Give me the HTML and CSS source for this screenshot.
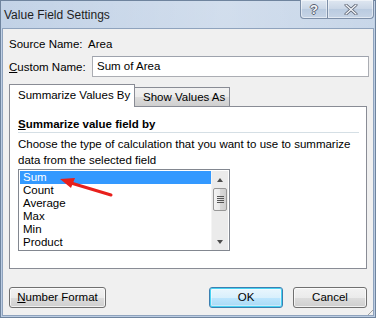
FILE: index.html
```html
<!DOCTYPE html>
<html lang="en">
<head>
    <meta charset="UTF-8">
    <title>Value Field Settings</title>
    <link rel="stylesheet" href="styles.css">
</head>
<body>
    <div class="window">
        <div class="titlebar">
            <span class="title">Value Field Settings</span>
            <div class="caption-btns">
                <div class="cap-btn help">?</div>
                <div class="cap-btn close">
                    <svg width="14" height="11" viewBox="0 0 14 11">
                        <path d="M2 1 L12 10 M12 1 L2 10" stroke="#5a6170" stroke-width="3" stroke-linecap="round"/>
                        <path d="M2 1 L12 10 M12 1 L2 10" stroke="#f4f6f9" stroke-width="1.4" stroke-linecap="round"/>
                    </svg>
                </div>
            </div>
        </div>

        <div class="content">
            <div class="row source-row">
                <span class="label">Source Name:</span>
                <span class="value">Area</span>
            </div>
            <div class="row custom-row">
                <span class="label"><u>C</u>ustom Name:</span>
                <div class="textbox">Sum of Area</div>
            </div>

            <div class="tabs">
                <div class="tab active">Summarize Values By</div>
                <div class="tab">Show Values As</div>
            </div>

            <div class="panel">
                <div class="heading"><u>S</u>ummarize value field by</div>
                <p class="desc">Choose the type of calculation that you want to use to summarize<br>data from the selected field</p>

                <div class="listbox">
                    <ul class="items">
                        <li class="selected">Sum</li>
                        <li>Count</li>
                        <li>Average</li>
                        <li>Max</li>
                        <li>Min</li>
                        <li>Product</li>
                    </ul>
                    <div class="scrollbar">
                        <div class="arrow up"></div>
                        <div class="track">
                            <div class="thumb"><span></span><span></span><span></span><span></span></div>
                        </div>
                        <div class="arrow down"></div>
                    </div>
                    <svg class="pointer" width="60" height="22" viewBox="0 0 60 22">
                        <path d="M52 18 L12 6" stroke="#e8201c" stroke-width="3" stroke-linecap="round"/>
                        <path d="M1 2 L16 1 L12 11 Z" fill="#e8201c"/>
                    </svg>
                </div>
            </div>

            <div class="buttons">
                <button class="btn"><u>N</u>umber Format</button>
                <div class="right-btns">
                    <button class="btn default">OK</button>
                    <button class="btn">Cancel</button>
                </div>
            </div>
            <div class="grip"></div>
        </div>
    </div>
</body>
</html>
```

FILE: styles.css
```css
* {
    margin: 0;
    padding: 0;
    box-sizing: border-box;
}

body {
    font-family: 'Liberation Sans', Arial, sans-serif;
    font-size: 11.5px;
    color: #000;
    background: #fff;
}

.window {
    width: 376px;
    height: 318px;
    border: 1px solid #6f849e;
    background: linear-gradient(180deg, #c3d3e7 0%, #b9cbe2 60%, #bccde3 100%);
    padding: 0 1px 1px 1px;
    display: flex;
    flex-direction: column;
}

.titlebar {
    height: 27px;
    flex-shrink: 0;
    display: flex;
    justify-content: space-between;
    align-items: flex-start;
    background: linear-gradient(90deg, rgba(255,255,255,0) 0%, rgba(255,255,255,0.25) 60%, rgba(255,255,255,0.1) 100%);
}

.title {
    padding: 7px 0 0 2px;
    font-size: 12px;
    color: #1e1e1e;
    white-space: nowrap;
}

.caption-btns {
    display: flex;
    margin-top: -1px;
}

.cap-btn {
    height: 19px;
    border: 1px solid #7d8fa8;
    border-top: none;
    background: linear-gradient(180deg, #dfe7f1 0%, #c9d6e6 50%, #bacbe0 51%, #c6d4e6 100%);
    display: flex;
    justify-content: center;
    align-items: center;
    box-shadow: inset 0 0 0 1px rgba(255,255,255,0.5);
}

.help {
    width: 28px;
    border-radius: 0 0 0 4px;
    font-weight: bold;
    font-size: 13px;
    color: #f4f6f9;
    text-shadow: 1px 0 0 #5a6170, -1px 0 0 #5a6170, 0 1px 0 #5a6170, 0 -1px 0 #5a6170;
}

.close {
    width: 46px;
    border-left: none;
    border-radius: 0 0 4px 0;
}

.content {
    flex: 1;
    position: relative;
    border: 1px solid #8fa3bd;
    background: #f0f0f0;
    padding: 6px 6px 0 6px;
}

.row {
    display: flex;
    align-items: center;
    white-space: nowrap;
}

.source-row {
    height: 17px;
}

.source-row .label {
    width: 79px;
}

.custom-row {
    margin-top: 4px;
}

.custom-row .label {
    width: 83px;
}

.textbox {
    flex: 1;
    height: 21px;
    margin-right: -2px;
    border: 1px solid #abadb3;
    border-top-color: #9ea3ad;
    background: #fff;
    padding: 1px 0 0 4px;
    line-height: 17px;
}

.tabs {
    display: flex;
    align-items: flex-end;
    margin-top: 7px;
    position: relative;
    z-index: 1;
    white-space: nowrap;
}

.tab {
    height: 19px;
    padding: 0 8px;
    border: 1px solid #898c95;
    border-bottom: none;
    background: linear-gradient(180deg, #f2f2f2 0%, #ebebeb 50%, #dddddd 51%, #cfcfcf 100%);
    line-height: 19px;
}

.tab.active {
    width: 126px;
    height: 23px;
    background: #fff;
    padding: 0 0 0 8px;
    line-height: 20px;
    margin-bottom: -1px;
}

.tab.active + .tab {
    border-left: none;
    width: 95px;
}

.panel {
    height: 163px;
    border: 1px solid #898c95;
    background: #fff;
    padding: 9px 7px 0 8px;
}

.heading {
    font-weight: bold;
    height: 17px;
    line-height: 16px;
    border-bottom: 1px solid #d5dfe5;
}

.desc {
    margin-top: 3px;
    line-height: 16px;
    white-space: nowrap;
}

.listbox {
    position: relative;
    width: 212px;
    height: 82px;
    margin-top: 1px;
    border: 1px solid #828790;
    display: flex;
    background: #fff;
}

.items {
    list-style: none;
    flex: 1;
    padding: 1px 0 0 1px;
}

.items li {
    height: 13px;
    line-height: 13px;
    padding-left: 3px;
}

.items li.selected {
    background: #3399ff;
    color: #fff;
}

.scrollbar {
    width: 17px;
    margin-top: 1px;
    margin-right: 1px;
    display: flex;
    flex-direction: column;
    background: #ebebeb;
    border-left: 1px solid #f4f4f4;
}

.arrow {
    height: 17px;
    display: flex;
    justify-content: center;
    align-items: center;
}

.arrow::after {
    content: '';
    border-left: 3.5px solid transparent;
    border-right: 3.5px solid transparent;
}

.arrow.up::after {
    border-bottom: 4px solid #4d4d4d;
}

.arrow.down::after {
    border-top: 4px solid #4d4d4d;
}

.track {
    flex: 1;
}

.thumb {
    margin: 0 1px;
    height: 23px;
    border: 1px solid #979797;
    border-radius: 2px;
    background: linear-gradient(90deg, #f3f3f3 0%, #e9e9e9 50%, #d9d9d9 51%, #cfcfcf 100%);
    display: flex;
    flex-direction: column;
    justify-content: center;
    align-items: center;
    gap: 1px;
}

.thumb span {
    width: 7px;
    height: 1px;
    background: #555;
}

.pointer {
    position: absolute;
    left: 40px;
    top: 7px;
}

.buttons {
    display: flex;
    justify-content: space-between;
    margin-top: 18px;
}

.right-btns {
    display: flex;
    gap: 10px;
}

.btn {
    font-family: 'Liberation Sans', Arial, sans-serif;
    font-size: 11.5px;
    color: #000;
    height: 21px;
    width: 74px;
    border: 1px solid #707070;
    border-radius: 3px;
    background: linear-gradient(180deg, #f2f2f2 0%, #ebebeb 50%, #dddddd 51%, #cfcfcf 100%);
    box-shadow: inset 0 0 0 1px rgba(255,255,255,0.7);
    line-height: 17px;
    white-space: nowrap;
}

.buttons > .btn {
    width: 97px;
}

.btn.default {
    border-color: #3c7fb1;
    box-shadow: inset 0 0 0 1px #48d2f2, inset 0 0 0 2px rgba(255,255,255,0.4);
    background: linear-gradient(180deg, #eaf6fd 0%, #d9f0fc 50%, #bee6fd 51%, #a7d9f5 100%);
}

.grip {
    position: absolute;
    right: 0;
    bottom: 0;
    width: 10px;
    height: 10px;
    background: repeating-linear-gradient(135deg, transparent 0 2px, #a0a0a0 2px 3px, transparent 3px 4px);
    clip-path: polygon(100% 0, 100% 100%, 0 100%);
}
```
